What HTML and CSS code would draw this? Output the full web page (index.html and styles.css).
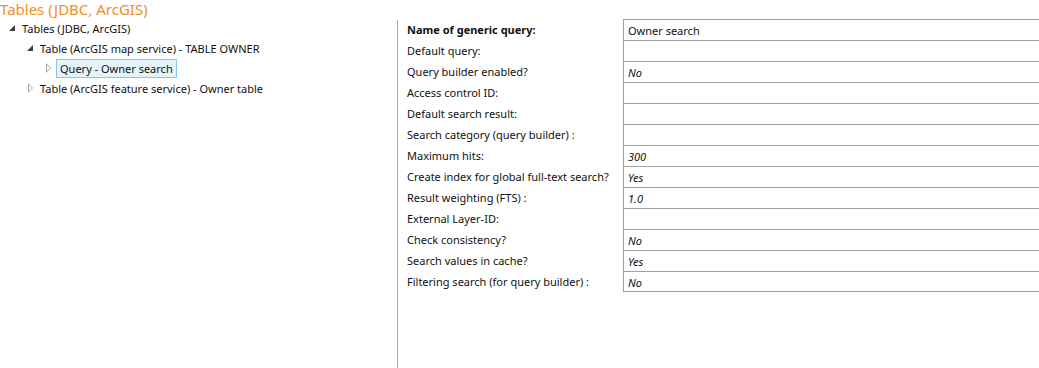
FILE: index.html
```html
<!DOCTYPE html>
<html lang="en">
<head>
  <meta charset="UTF-8">
  <title>Tables (JDBC, ArcGIS)</title>
  <link rel="stylesheet" href="styles.css">
</head>
<body>
  <h1 class="page-title">Tables (JDBC, ArcGIS)</h1>
  <div class="workspace">
    <div class="tree">
      <div class="tree-item level-0">
        <span class="toggle open"></span>
        <span class="tree-text">Tables (JDBC, ArcGIS)</span>
      </div>
      <div class="tree-item level-1">
        <span class="toggle open"></span>
        <span class="tree-text">Table (ArcGIS map service) - TABLE OWNER</span>
      </div>
      <div class="tree-item level-2">
        <span class="toggle closed"></span>
        <span class="tree-text selected">Query - Owner search</span>
      </div>
      <div class="tree-item level-1">
        <span class="toggle closed"></span>
        <span class="tree-text">Table (ArcGIS feature service) - Owner table</span>
      </div>
    </div>

    <div class="details">
      <div class="props">
        <div class="prop-label bold">Name of generic query:</div>
        <div class="prop-value plain">Owner search</div>

        <div class="prop-label">Default query:</div>
        <div class="prop-value"></div>

        <div class="prop-label">Query builder enabled?</div>
        <div class="prop-value">No</div>

        <div class="prop-label">Access control ID:</div>
        <div class="prop-value"></div>

        <div class="prop-label">Default search result:</div>
        <div class="prop-value"></div>

        <div class="prop-label">Search category (query builder) :</div>
        <div class="prop-value"></div>

        <div class="prop-label">Maximum hits:</div>
        <div class="prop-value">300</div>

        <div class="prop-label">Create index for global full-text search?</div>
        <div class="prop-value">Yes</div>

        <div class="prop-label">Result weighting (FTS) :</div>
        <div class="prop-value">1.0</div>

        <div class="prop-label">External Layer-ID:</div>
        <div class="prop-value"></div>

        <div class="prop-label">Check consistency?</div>
        <div class="prop-value">No</div>

        <div class="prop-label">Search values in cache?</div>
        <div class="prop-value">Yes</div>

        <div class="prop-label">Filtering search (for query builder) :</div>
        <div class="prop-value last">No</div>
      </div>
    </div>
  </div>
</body>
</html>
```

FILE: styles.css
```css
body {
  margin: 0;
  font-family: "Noto Sans", "Open Sans", sans-serif;
  font-size: 11px;
  color: #111;
  background: #fff;
  height: 368px;
  overflow: hidden;
}

.page-title {
  margin: 0;
  height: 18px;
  line-height: 18px;
  font-size: 15px;
  font-weight: normal;
  color: #f0901e;
}

.workspace {
  display: flex;
  height: 350px;
}

/* tree on the left */
.tree {
  width: 397px;
}

.tree-item {
  display: flex;
  align-items: center;
  height: 20px;
}

.level-0 { padding-left: 7px; }
.level-1 { padding-left: 25px; }
.level-2 { padding-left: 43px; }

.toggle {
  width: 14px;
  height: 20px;
  flex: none;
  position: relative;
}

.toggle.open::before {
  content: "";
  position: absolute;
  left: 2px;
  top: 7px;
  border-style: solid;
  border-width: 0 0 6px 6px;
  border-color: transparent transparent #3b3b3b transparent;
}

.toggle.closed::before {
  content: "";
  position: absolute;
  left: 3px;
  top: 5px;
  border-style: solid;
  border-width: 5px 0 5px 5px;
  border-color: transparent transparent transparent #a6a6a6;
}

.toggle.closed::after {
  content: "";
  position: absolute;
  left: 4px;
  top: 7px;
  border-style: solid;
  border-width: 3px 0 3px 3px;
  border-color: transparent transparent transparent #fff;
}

.tree-text {
  white-space: nowrap;
  padding: 0 3px 0 1px;
  line-height: 17px;
}

.tree-text.selected {
  background: #e5f3fb;
  border: 1px solid #84c8ef;
  padding: 0 3px 0 3px;
  margin-left: -1px;
}

/* property sheet on the right */
.details {
  flex: 1;
  border-left: 1px solid #a9a9a9;
  margin-top: 2px;
}

.props {
  display: grid;
  grid-template-columns: 225px 1fr;
  grid-auto-rows: 21px;
  margin-top: -1px;
}

.prop-label {
  padding-left: 9px;
  line-height: 22px;
  white-space: nowrap;
}

.prop-label.bold {
  font-weight: bold;
}

.prop-value {
  border-top: 1px solid #a0a0a0;
  border-left: 1px solid #a0a0a0;
  padding-left: 4px;
  line-height: 21px;
  font-style: italic;
}

.prop-value.plain {
  font-style: normal;
}

.prop-value.last {
  border-bottom: 1px solid #a0a0a0;
}
```
